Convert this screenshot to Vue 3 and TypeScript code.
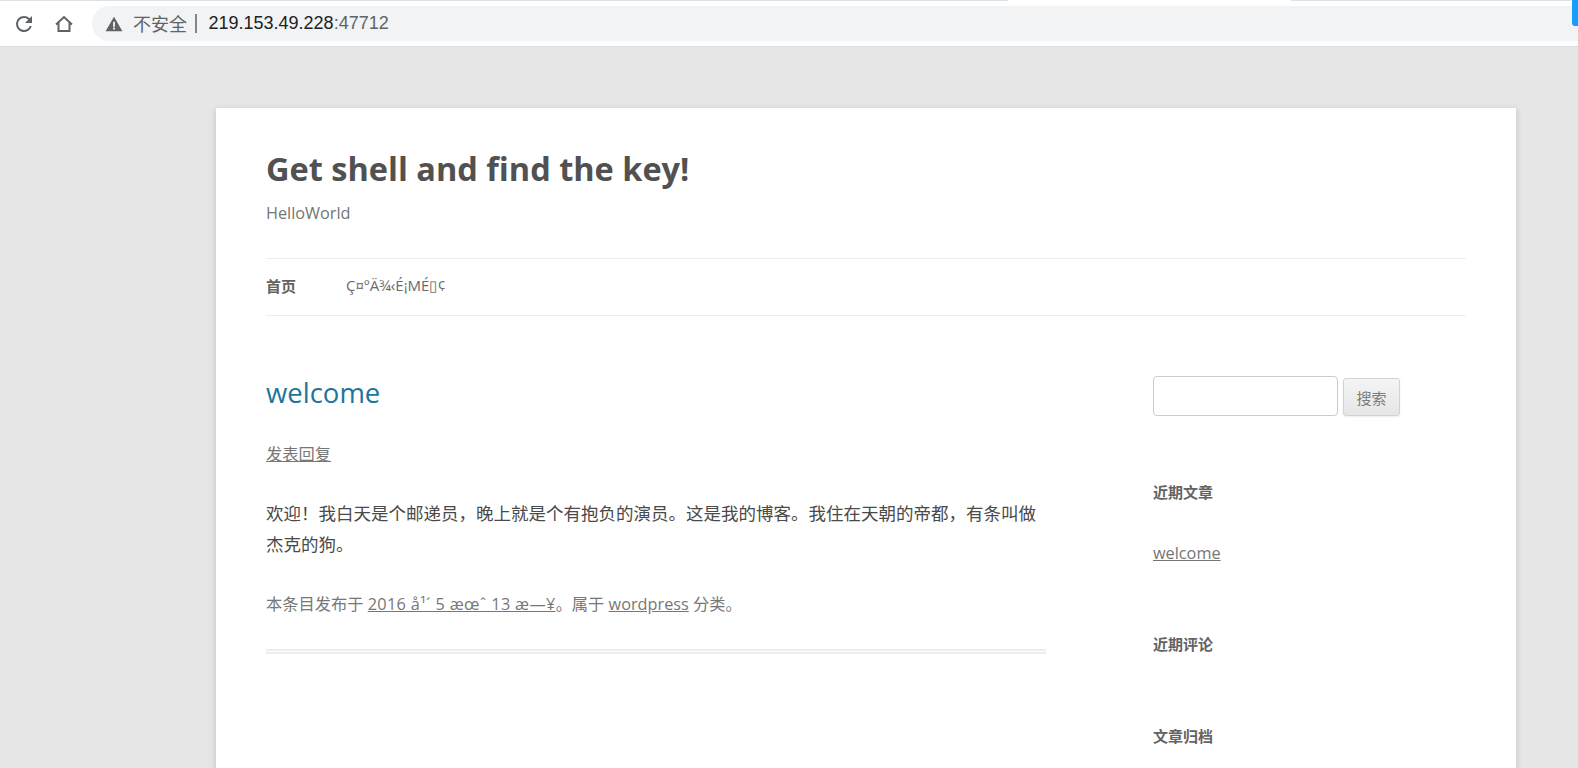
<script setup lang="ts">
const url = { host: '219.153.49.228', port: ':47712' }
const mainWidgets = ['近期评论', '文章归档']
</script>

<template>
  <div class="browser">
    <div class="tabline">
      <span class="tabline-a"></span>
      <span class="tabline-b"></span>
    </div>
    <span class="corner"></span>
    <div class="toolbar">
      <svg class="tool-icon" viewBox="0 0 24 24" width="24" height="24">
        <path fill="#5f6368" d="M17.65 6.35A7.96 7.96 0 0 0 12 4a8 8 0 1 0 7.73 10h-2.08A6 6 0 1 1 12 6c1.66 0 3.14.69 4.22 1.78L13 11h7V4l-2.35 2.35z" />
      </svg>
      <svg class="tool-icon" viewBox="0 0 24 24" width="24" height="24">
        <path fill="none" stroke="#5f6368" stroke-width="2" d="M4 12.5 12 5l8 7.5M6.5 11v8h11v-8" />
      </svg>
      <div class="omnibox">
        <svg class="warn" viewBox="0 0 16 16" width="18" height="18">
          <path fill="#5f6368" d="M8 1.5 15.5 14.5H.5L8 1.5z" />
          <path fill="#f1f3f4" d="M7.2 6h1.6v4.4H7.2zM7.2 11.2h1.6v1.6H7.2z" />
        </svg>
        <span class="insecure">不安全</span>
        <span class="sep"></span>
        <span class="host">{{ url.host }}</span><span class="port">{{ url.port }}</span>
      </div>
    </div>

    <div class="page">
      <div class="card">
        <header class="site-header">
          <h1 class="site-title">Get shell and find the key!</h1>
          <h2 class="site-desc">HelloWorld</h2>
        </header>
        <nav class="nav">
          <a class="nav-item nav-current">首页</a>
          <a class="nav-item">Ç¤ºÄ¾‹É¡ΜÉ▯¢</a>
        </nav>
        <div class="columns">
          <main class="content">
            <h1 class="post-title">welcome</h1>
            <a class="reply">发表回复</a>
            <p class="post-text">欢迎！我白天是个邮递员，晚上就是个有抱负的演员。这是我的博客。我住在天朝的帝都，有条叫做杰克的狗。</p>
            <p class="post-meta">本条目发布于 <a class="post-date">2016 å¹´ 5 æœˆ 13 æ—¥</a>。属于 <a>wordpress</a> 分类。</p>
            <div class="post-rule"></div>
          </main>
          <aside class="sidebar">
            <form class="search" @submit.prevent>
              <input class="search-input" type="text" />
              <button class="search-btn" type="submit">搜索</button>
            </form>
            <h3 class="widget-title first">近期文章</h3>
            <a class="widget-link">welcome</a>
            <h3 v-for="w in mainWidgets" :key="w" class="widget-title" :class="{ archive: w === '文章归档' }">{{ w }}</h3>
          </aside>
        </div>
      </div>
    </div>
  </div>
</template>

<style>
html, body {
  margin: 0;
  height: 768px;
  overflow: hidden;
  background: #e6e6e6;
}
</style>

<style scoped>
.browser {
  position: relative;
  height: 768px;
  overflow: hidden;
  font-family: "Open Sans", "Noto Sans CJK SC", sans-serif;
  color: #444;
}
.tabline {
  display: flex;
  height: 1px;
  background: #fff;
}
.tabline-a {
  width: 1008px;
  background: #dee1e6;
}
.tabline-b {
  width: 280px;
  margin-left: 283px;
  background: #dee1e6;
}
.corner {
  position: absolute;
  top: 0;
  right: 0;
  width: 6px;
  height: 26px;
  background: #1a9cff;
  border-bottom-left-radius: 3px;
}
.toolbar {
  display: flex;
  align-items: center;
  height: 46px;
  box-sizing: border-box;
  padding: 5px 0 5px 12px;
  gap: 16px;
  background: #fff;
  border-bottom: 1px solid #dadce0;
}
.tool-icon {
  flex: none;
}
.omnibox {
  flex: 1;
  display: flex;
  align-items: center;
  height: 35px;
  padding-left: 13px;
  background: #f1f3f4;
  border-radius: 18px 0 0 18px;
  font-family: "Liberation Sans", "Noto Sans CJK SC", sans-serif;
  font-size: 18px;
  white-space: nowrap;
}
.warn {
  margin-right: 10px;
}
.insecure {
  color: #5f6368;
  margin-top: -2px;
}
.sep {
  width: 1.5px;
  height: 19px;
  margin: 0 12px 0 8px;
  background: #80868b;
}
.host {
  color: #202124;
}
.port {
  color: #5f6368;
}
.page {
  padding: 61px 62px 0 216px;
}
.card {
  padding: 0 50px;
  min-height: 700px;
  background: #fff;
  box-shadow: 0 2px 6px rgba(100, 100, 100, 0.3);
}
.site-header {
  padding-top: 38px;
  height: 112px;
}
.site-title {
  margin: 0;
  font-size: 32.5px;
  line-height: 46px;
  font-weight: 700;
  color: #515151;
}
.site-desc {
  margin: 9px 0 0;
  font-size: 16.25px;
  line-height: 24px;
  font-weight: 400;
  color: #757575;
}
.nav {
  display: flex;
  align-items: center;
  gap: 50px;
  height: 56px;
  border-top: 1px solid #ededed;
  border-bottom: 1px solid #ededed;
  font-size: 15px;
  color: #6a6a6a;
}
.nav-item {
  margin-bottom: 4px;
}
.nav-current {
  font-weight: 700;
  color: #636363;
}
.columns {
  display: flex;
  justify-content: space-between;
  padding-top: 57px;
}
.content {
  width: 780px;
}
.post-title {
  margin: 2px 0 0;
  font-size: 27.5px;
  line-height: 36px;
  font-weight: 400;
  color: #21759b;
}
.reply {
  display: block;
  margin-top: 31px;
  font-size: 16.25px;
  line-height: 24px;
  color: #777;
  text-decoration: underline;
}
.post-text {
  margin: 32px 0 0;
  font-size: 17.5px;
  line-height: 31px;
  color: #4a4a4a;
}
.post-meta {
  margin: 32px 0 0;
  font-size: 16.25px;
  line-height: 24px;
  color: #777;
}
.post-meta a {
  text-decoration: underline;
}
.post-meta .post-date {
  letter-spacing: 0.33px;
}
.post-rule {
  height: 1px;
  margin-top: 33px;
  border-top: 2px solid #ededed;
  border-bottom: 2px solid #ededed;
}
.sidebar {
  width: 313px;
}
.search {
  display: flex;
  align-items: flex-end;
  gap: 5px;
  margin-top: 3px;
}
.search-input {
  box-sizing: border-box;
  width: 185px;
  height: 40px;
  margin: 0;
  border: 1px solid #ccc;
  border-radius: 4px;
  background: #fff;
}
.search-btn {
  box-sizing: border-box;
  width: 57px;
  height: 38px;
  padding: 0;
  border: 1px solid #d2d2d2;
  border-radius: 3px;
  background: linear-gradient(#f4f4f4, #e6e6e6);
  box-shadow: 0 1px 2px rgba(64, 64, 64, 0.1);
  font-family: inherit;
  font-size: 15px;
  color: #7c7c7c;
}
.widget-title {
  margin: 0;
  padding-top: 67px;
  font-size: 15px;
  line-height: 24px;
  font-weight: 700;
  color: #636363;
}
.widget-title.first {
  padding-top: 64px;
}
.widget-title.archive {
  padding-top: 68px;
}
.widget-link {
  display: block;
  margin-top: 37px;
  font-size: 16.25px;
  line-height: 24px;
  color: #757575;
  text-decoration: underline;
}
</style>
